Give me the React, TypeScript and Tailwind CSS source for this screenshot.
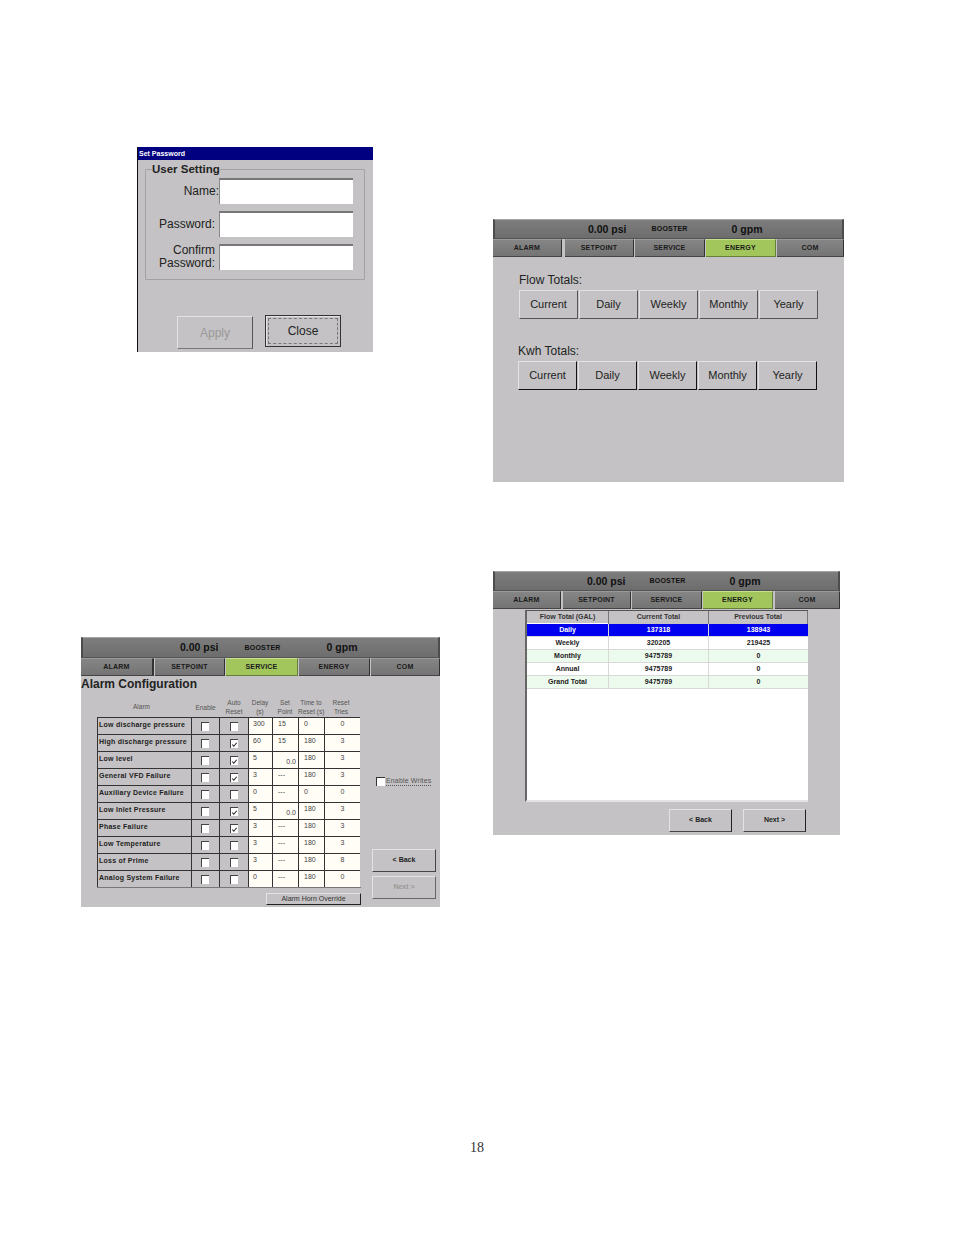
import type { ReactNode } from 'react';

const sans = 'font-["Liberation_Sans",Arial,sans-serif]';

const alarmRows = [
  { name: 'Low discharge pressure', auto: false, delay: '300', set: '15', time: '0', tries: '0' },
  { name: 'High discharge pressure', auto: true, delay: '60', set: '15', time: '180', tries: '3' },
  { name: 'Low level', auto: true, delay: '5', set: '0.0', time: '180', tries: '3' },
  { name: 'General VFD Failure', auto: true, delay: '3', set: '---', time: '180', tries: '3' },
  { name: 'Auxiliary Device Failure', auto: false, delay: '0', set: '---', time: '0', tries: '0' },
  { name: 'Low Inlet Pressure', auto: true, delay: '5', set: '0.0', time: '180', tries: '3' },
  { name: 'Phase Failure', auto: true, delay: '3', set: '---', time: '180', tries: '3' },
  { name: 'Low Temperature', auto: false, delay: '3', set: '---', time: '180', tries: '3' },
  { name: 'Loss of Prime', auto: false, delay: '3', set: '---', time: '180', tries: '8' },
  { name: 'Analog System Failure', auto: false, delay: '0', set: '---', time: '180', tries: '0' },
];

const flowRows = [
  { label: 'Daily', current: '137318', previous: '138943', row: 'bg-[#0000f0] text-white' },
  { label: 'Weekly', current: '320205', previous: '219425', row: 'bg-white text-[#222]' },
  { label: 'Monthly', current: '9475789', previous: '0', row: 'bg-[#edfbee] text-[#222]' },
  { label: 'Annual', current: '9475789', previous: '0', row: 'bg-white text-[#222]' },
  { label: 'Grand Total', current: '9475789', previous: '0', row: 'bg-[#edfbee] text-[#222]' },
];

function StatusBar({ psi, gpm, className, boosterClass, gpmClass }: { psi: string; gpm: string; className: string; boosterClass: string; gpmClass: string }) {
  return (
    <div className={`flex items-center border-t border-t-[#a5a5a5] border-r-2 border-r-[#4c4c4c] border-l-2 border-l-[#4c4c4c] border-b border-b-[#555] bg-gradient-to-b from-[#7d7d7d] to-[#6d6d6d] pt-[1px] text-[#111] ${className}`}>
      <span className="text-[10.5px] font-bold">{psi}</span>
      <span className={`text-[7px] font-bold tracking-[0.2px] ${boosterClass}`}>BOOSTER</span>
      <span className={`text-[10.5px] font-bold ${gpmClass}`}>{gpm}</span>
    </div>
  );
}

function Tab({ label, active, className }: { label: string; active?: boolean; className: string }) {
  return (
    <div
      className={`flex h-[18px] shrink-0 items-center justify-center border-t border-b border-r pt-[1px] text-[7px] font-bold tracking-[0.2px] text-[#1a1a1a] ${
        active
          ? 'border-t-[#c9e08e] border-b-[#66803a] border-r-[#66803a] bg-[#a2c65c]'
          : 'border-t-[#9a9a9a] border-b-[#444] border-r-[#333] bg-gradient-to-b from-[#858585] to-[#747474]'
      } ${className}`}
    >
      {label}
    </div>
  );
}

function Check({ checked }: { checked: boolean }) {
  return (
    <div className="flex h-[9px] w-[8px] items-center justify-center border-t border-l border-t-[#444] border-l-[#444] bg-white">
      {checked && (
        <svg viewBox="0 0 8 8" className="h-[7px] w-[7px]">
          <path d="M1.5 4 L3.2 6 L6.5 2" fill="none" stroke="#222" strokeWidth="1.2" />
        </svg>
      )}
    </div>
  );
}

function WinButton({ children, className }: { children: ReactNode; className: string }) {
  return (
    <div className={`flex items-center justify-center border-t border-l border-t-[#e4e2e4] border-l-[#e4e2e4] border-r border-b ${className}`}>
      {children}
    </div>
  );
}

function Field({ label, wrap }: { label: ReactNode; wrap: string }) {
  return (
    <div className="flex h-[26px] items-center">
      <div className={`w-[73px] text-right text-[12px] leading-[13px] text-[#222] ${wrap}`}>{label}</div>
      <div className="h-[26px] w-[134px] border-t-2 border-l border-t-[#777] border-l-[#888] bg-white" />
    </div>
  );
}

function PasswordDialog() {
  return (
    <div className={`ml-[56px] h-[205px] w-[236px] border-l border-l-[#111] bg-[#c4c2c4] ${sans}`}>
      <div className="flex h-[13px] items-center bg-[#000080] pt-[1px] pl-[1px] text-[7px] font-bold text-white">Set Password</div>
      <fieldset className="mt-[2px] ml-[7px] h-[118px] w-[220px] rounded-[1px] border border-[#a3a1a3]">
        <legend className="ml-[6px] text-[11.5px] leading-[14px] font-bold text-[#222]">User Setting</legend>
        <div className="mt-[2px] flex flex-col gap-[7px]">
          <Field label="Name:" wrap="pr-0" />
          <Field label="Password:" wrap="pr-[4px]" />
          <Field label={<>Confirm<br />Password:</>} wrap="pr-[4px]" />
        </div>
      </fieldset>
      <div className="mt-[35px] flex items-start gap-[12px] pl-[39px]">
        <WinButton className="mt-[1px] h-[33px] w-[76px] border-r-[#555] border-b-[#777] text-[12px] text-[#999]">Apply</WinButton>
        <div className="h-[32px] w-[76px] border border-[#333] p-[2px] shadow-[inset_1px_1px_0_#e4e2e4]">
          <div className="flex h-full items-center justify-center border border-dashed border-[#777] text-[12px] text-[#222]">Close</div>
        </div>
      </div>
    </div>
  );
}

function EnergyPanel() {
  const labels = ['Current', 'Daily', 'Weekly', 'Monthly', 'Yearly'];
  return (
    <div className={`h-[263px] w-[351px] bg-[#c4c2c4] ${sans}`}>
      <StatusBar psi="0.00 psi" gpm="0 gpm" className="h-[20px] pl-[93px]" boosterClass="ml-[25px]" gpmClass="ml-[44px]" />
      <div className="flex gap-[1px]">
        <Tab label="ALARM" className="w-[69px]" />
        <Tab label="SETPOINT" className="ml-[2px] w-[69px]" />
        <Tab label="SERVICE" className="w-[70px]" />
        <Tab label="ENERGY" active className="w-[70px]" />
        <Tab label="COM" className="w-[67px]" />
      </div>
      <div className="mt-[16px] ml-[26px] text-[12px] leading-[14px] text-[#222]">Flow Totals:</div>
      <div className="mt-[3px] ml-[26px] flex gap-[1px]">
        {labels.map((label) => (
          <WinButton key={label} className="h-[29px] w-[59px] border-r-[#555] border-b-[#555] text-[11px] text-[#222]">
            {label}
          </WinButton>
        ))}
      </div>
      <div className="mt-[25px] ml-[25px] text-[12px] leading-[14px] text-[#222]">Kwh Totals:</div>
      <div className="mt-[3px] ml-[25px] flex gap-[1px]">
        {labels.map((label) => (
          <WinButton key={label} className="h-[29px] w-[59px] border-r-[#111] border-b-[#111] text-[11px] text-[#222]">
            {label}
          </WinButton>
        ))}
      </div>
    </div>
  );
}

function FlowTotalPanel() {
  return (
    <div className={`h-[264px] w-[347px] bg-[#c4c2c4] ${sans}`}>
      <StatusBar psi="0.00 psi" gpm="0 gpm" className="h-[20px] pl-[92px]" boosterClass="ml-[24px]" gpmClass="ml-[44px]" />
      <div className="flex gap-[1px]">
        <Tab label="ALARM" className="w-[68px]" />
        <Tab label="SETPOINT" className="ml-[1px] w-[68px]" />
        <Tab label="SERVICE" className="w-[70px]" />
        <Tab label="ENERGY" active className="w-[70px]" />
        <Tab label="COM" className="ml-[1px] w-[65px]" />
      </div>
      <div className="mt-[1px] ml-[32px] h-[192px] w-[283px] border-t border-l-2 border-t-[#555] border-l-[#666] border-b-2 border-b-[#e4e2e4] bg-white text-[7px] font-bold">
        <div className="grid h-[13px] grid-cols-[81px_100px_100px] bg-[#c4c2c4] text-[#333]">
          <div className="flex items-center justify-center border-b border-b-white">Flow Total (GAL)</div>
          <div className="flex items-center justify-center border-l border-[#777]">Current Total</div>
          <div className="flex items-center justify-center border-l border-r border-[#777]">Previous Total</div>
        </div>
        {flowRows.map((r) => (
          <div key={r.label} className={`grid h-[13px] grid-cols-[81px_100px_100px] border-b border-b-[#d8d8d8] ${r.row}`}>
            <div className="flex items-center justify-center">{r.label}</div>
            <div className="flex items-center justify-center border-l border-[#d8d8d8]">{r.current}</div>
            <div className="flex items-center justify-center border-l border-[#d8d8d8]">{r.previous}</div>
          </div>
        ))}
      </div>
      <div className="mt-[7px] flex gap-[11px] pl-[176px]">
        <WinButton className="h-[23px] w-[63px] border-r-[#222] border-b-[#444] text-[7px] font-bold text-[#222]">&lt; Back</WinButton>
        <WinButton className="h-[23px] w-[63px] border-r-[#222] border-b-[#444] text-[7px] font-bold text-[#222]">Next &gt;</WinButton>
      </div>
    </div>
  );
}

function AlarmPanel() {
  const cols = 'grid grid-cols-[95px_28px_28px_24px_26px_26px_36px]';
  const cell = 'border-t border-l border-t-[#333] border-l-[#333] bg-[#fffdf6] text-[7px] leading-[12px] text-[#444]';
  return (
    <div className={`h-[270px] w-[359px] bg-[#c4c2c4] ${sans}`}>
      <StatusBar psi="0.00 psi" gpm="0 gpm" className="h-[21px] pl-[97px]" boosterClass="ml-[26px]" gpmClass="ml-[46px]" />
      <div className="flex gap-[1px]">
        <Tab label="ALARM" className="w-[73px] border-r-2" />
        <Tab label="SETPOINT" className="w-[70px]" />
        <Tab label="SERVICE" active className="w-[72px]" />
        <Tab label="ENERGY" className="w-[71px]" />
        <Tab label="COM" className="w-[69px]" />
      </div>
      <div className="h-[16px] text-[12px] leading-[16px] font-bold text-[#222]">Alarm Configuration</div>
      <div className="flex">
        <div className="ml-[16px] w-[264px]">
          <div className={`${cols} mt-[6px] h-[19px] text-center text-[6.5px] leading-[9px] text-[#555]`}>
            <div className="pt-[4px] pr-[6px]">Alarm</div>
            <div className="pt-[5px] pr-[1px]">Enable</div>
            <div>Auto<br />Reset</div>
            <div>Delay<br />(s)</div>
            <div>Set<br />Point</div>
            <div className="whitespace-nowrap">Time to<br />Reset (s)</div>
            <div className="pr-[2px]">Reset<br />Tries</div>
          </div>
          <div className="border-b border-b-[#777]">
            {alarmRows.map((r) => (
              <div key={r.name} className={`${cols} h-[17px]`}>
                <div className="flex items-center border-t border-l border-r border-t-[#333] border-l-[#333] border-r-[#333] pb-[1px] pl-[1px] text-[7px] font-bold tracking-[0.25px] whitespace-nowrap text-[#222]">{r.name}</div>
                <div className="flex items-center justify-center border-t border-r border-t-[#333] border-r-[#333] pt-[1px] pr-[2px]"><Check checked={false} /></div>
                <div className="flex items-center justify-center border-t border-t-[#333] pt-[1px] pr-[1px]"><Check checked={r.auto} /></div>
                <div className={`${cell} pl-[4px]`}>{r.delay}</div>
                <div className={`${cell} ${r.set === '0.0' ? 'pt-[4px] pr-[2px] text-right' : 'pl-[5px]'}`}>{r.set}</div>
                <div className={`${cell} pl-[5px]`}>{r.time}</div>
                <div className={`${cell} text-center`}>{r.tries}</div>
              </div>
            ))}
          </div>
          <WinButton className="mt-[5px] ml-[169px] h-[12px] w-[95px] border-r-[#222] border-b-[#222] text-[7px] text-[#333]">Alarm Horn Override</WinButton>
        </div>
        <div className="ml-[11px] w-[68px]">
          <div className="mt-[84px] flex items-center gap-[1px] pl-[4px]">
            <div className="h-[9px] w-[9px] border-t border-l border-t-[#333] border-l-[#333] bg-white" />
            <span className="border-b border-dotted border-[#555] text-[7px] leading-[9px] tracking-[0.15px] text-[#555]">Enable Writes</span>
          </div>
          <WinButton className="mt-[63px] h-[23px] w-[64px] border-r-[#444] border-b-[#444] text-[7px] font-bold text-[#222]">&lt; Back</WinButton>
          <WinButton className="mt-[4px] h-[23px] w-[64px] border-r-[#666] border-b-[#666] text-[7px] font-bold text-[#999]">Next &gt;</WinButton>
        </div>
      </div>
    </div>
  );
}

export default function App() {
  return (
    <div className="h-[1235px] w-[954px] bg-white">
      <div className="flex h-[1140px]">
        <div className="w-[493px] pt-[147px] pl-[81px]">
          <PasswordDialog />
          <div className="mt-[285px]">
            <AlarmPanel />
          </div>
        </div>
        <div className="pt-[219px]">
          <EnergyPanel />
          <div className="mt-[89px]">
            <FlowTotalPanel />
          </div>
        </div>
      </div>
      <div className="pl-[470px] font-['Liberation_Serif',serif] text-[14px] leading-[16px] text-[#333]">18</div>
    </div>
  );
}
